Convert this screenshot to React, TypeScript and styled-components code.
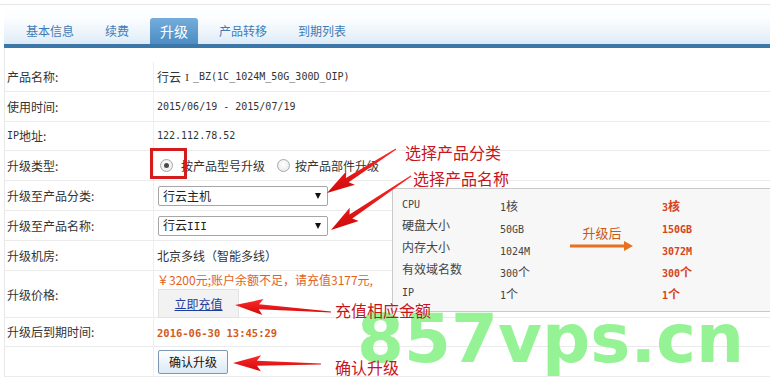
import React from 'react';
import styled, { createGlobalStyle } from 'styled-components';

const GlobalStyle = createGlobalStyle`
  html, body { margin: 0; padding: 0; background: #fff; }
  body {
    font-family: "Noto Sans CJK SC", "Liberation Sans", sans-serif;
    font-size: 12px;
    line-height: 16px;
    color: #333;
  }
`;

const Page = styled.div`
  position: relative;
  width: 770px;
  height: 387px;
  overflow: hidden;
  box-sizing: border-box;
  padding-top: 4px;
`;

const TopRule = styled.div`
  border-top: 1px solid #e6e6e6;
`;

const Header = styled.div`
  margin-left: 4px;
`;

const TabBar = styled.div`
  height: 39px;
  display: flex;
  align-items: flex-end;
  gap: 11px;
  padding-left: 12px;
  background: linear-gradient(#ffffff 0%, #fbfdff 35%, #e6f0f9 85%, #dce9f6 100%);
`;

const Tab = styled.div<{ $active?: boolean }>`
  height: 26px;
  line-height: 26px;
  padding: 0 10px;
  font-size: ${(p) => (p.$active ? '14px' : '12px')};
  color: ${(p) => (p.$active ? '#ffffff' : '#3f7cb6')};
  border-radius: 3px 3px 0 0;
  background: ${(p) => (p.$active ? 'linear-gradient(#74addb, #4c8dc4)' : 'transparent')};
`;

const BlueBar = styled.div`
  height: 4px;
  background: #3b77a8;
`;

const Table = styled.div`
  margin-left: 4px;
  padding-top: 14px;
  border-left: 1px solid #e8e8e8;
`;

const Row = styled.div<{ $h: number }>`
  display: grid;
  grid-template-columns: 149px 1fr;
  height: ${(p) => p.$h}px;
  box-sizing: border-box;
  border-bottom: 1px solid #ebebeb;
`;

const Label = styled.div`
  display: flex;
  align-items: center;
  padding-left: 2px;
  border-right: 1px solid #efefef;
  color: #333;
  font-size: 12px;
`;

const Value = styled.div<{ $column?: boolean }>`
  display: flex;
  flex-direction: ${(p) => (p.$column ? 'column' : 'row')};
  align-items: ${(p) => (p.$column ? 'flex-start' : 'center')};
  padding-left: 3px;
  padding-top: ${(p) => (p.$column ? '2px' : '0')};
  color: #333;
`;

const Mono = styled.span<{ $bold?: boolean; $size?: number }>`
  font-family: "DejaVu Sans Mono", "Liberation Mono", monospace;
  font-size: ${(p) => p.$size ?? 10}px;
  font-weight: ${(p) => (p.$bold ? 700 : 400)};
`;

const Roman = styled.span`
  display: inline-block;
  width: 12px;
  text-align: center;
  font-family: "Liberation Serif", serif;
  font-size: 11px;
`;

const RadioGroup = styled.div`
  display: flex;
  align-items: center;
`;

const RadioWrap = styled.span`
  position: relative;
  display: inline-flex;
  align-items: center;
  margin-left: 3px;
`;

const RadioDot = styled.span<{ $checked?: boolean }>`
  width: 11px;
  height: 11px;
  border-radius: 50%;
  border: 1px solid #a8a8a8;
  background: radial-gradient(circle at 50% 40%, #ffffff 0%, #e6e6e6 100%);
  display: inline-flex;
  align-items: center;
  justify-content: center;
  &::after {
    content: '';
    width: 5px;
    height: 5px;
    border-radius: 50%;
    background: ${(p) => (p.$checked ? '#4a4a4a' : 'transparent')};
  }
`;

const RadioText = styled.span<{ $gap: number }>`
  margin-left: ${(p) => p.$gap}px;
  margin-right: 12px;
  font-size: 12px;
  color: #333;
`;

const Highlight = styled.span`
  position: absolute;
  left: -10px;
  top: -11px;
  width: 37px;
  height: 31px;
  box-sizing: border-box;
  border: 3px solid #d41c1c;
  z-index: 3;
`;

const Select = styled.div`
  width: 170px;
  height: 20px;
  box-sizing: border-box;
  border: 1px solid #a6a6a6;
  border-radius: 2px;
  margin-left: 1px;
  display: flex;
  align-items: center;
  justify-content: space-between;
  padding: 0 6px 0 4px;
  background: #fff;
  color: #222;
  font-size: 12px;
`;

const Caret = styled.span`
  width: 0;
  height: 0;
  border-left: 3.5px solid transparent;
  border-right: 3.5px solid transparent;
  border-top: 6px solid #111;
`;

const PriceText = styled.div`
  color: #e2621c;
  font-size: 12px;
  line-height: 14px;
`;

const RechargeButton = styled.div`
  margin-top: 2px;
  margin-left: 1px;
  width: 81px;
  height: 29px;
  box-sizing: border-box;
  border: 1px solid #e2e2e2;
  background: #f2f2f2;
  display: flex;
  align-items: center;
  justify-content: center;
  color: #1f3d9a;
  text-decoration: underline;
  font-size: 12px;
`;

const Expire = styled.span`
  color: #d35b22;
`;

const ConfirmButton = styled.div`
  margin-left: 1px;
  width: 70px;
  height: 24px;
  box-sizing: border-box;
  border: 1px solid #7d97b3;
  border-radius: 2px;
  background: linear-gradient(#fdfeff, #dbe9f7);
  display: flex;
  align-items: center;
  justify-content: center;
  color: #111;
  font-size: 12px;
`;

const SpecBox = styled.div`
  position: absolute;
  left: 392px;
  top: 188px;
  width: 378px;
  height: 124px;
  box-sizing: border-box;
  border: 1px solid #c9c9c9;
  border-right: none;
  background: #f7f7f7;
  padding: 6px 0 0 9px;
  display: grid;
  grid-template-columns: 98px 68px 94px 1fr;
  grid-auto-rows: 22px;
  z-index: 2;
`;

const SpecLabel = styled.div<{ $row: number }>`
  grid-row: ${(p) => p.$row};
  grid-column: 1;
  align-self: start;
  color: #444;
  font-size: 12px;
  line-height: 16px;
`;

const SpecValue = styled.div<{ $row: number; $new?: boolean }>`
  grid-row: ${(p) => p.$row};
  grid-column: ${(p) => (p.$new ? 4 : 2)};
  align-self: end;
  color: ${(p) => (p.$new ? '#d4441c' : '#444')};
  font-weight: ${(p) => (p.$new ? 700 : 400)};
  font-size: 12px;
  line-height: 16px;
  padding-bottom: 1px;
`;

const SpecArrowCell = styled.div`
  grid-column: 3;
  grid-row: 2 / span 2;
  width: 66px;
  display: flex;
  flex-direction: column;
  align-items: center;
  justify-content: center;
`;

const SpecArrowText = styled.div`
  color: #c85a18;
  font-size: 13px;
  line-height: 14px;
  margin-left: 2px;
`;

const Watermark = styled.div`
  position: absolute;
  left: 357px;
  top: 305px;
  font-family: "DejaVu Sans", sans-serif;
  font-weight: 700;
  font-size: 67.5px;
  line-height: 67.5px;
  color: #95f395;
  white-space: nowrap;
  z-index: 4;
  pointer-events: none;
`;

const Overlay = styled.svg`
  position: absolute;
  left: 0;
  top: 0;
  z-index: 5;
  pointer-events: none;
`;

const Note = styled.div<{ $left: number; $top: number }>`
  position: absolute;
  left: ${(p) => p.$left}px;
  top: ${(p) => p.$top}px;
  color: #c8141c;
  font-size: 16px;
  line-height: 20px;
  white-space: nowrap;
  z-index: 5;
`;

type P = [number, number];

function arrowPoints(tail: P, tip: P, headLen = 24, headW = 16, shaftW = 5, tailW = 1): string {
  const [tx, ty] = tail;
  const [hx, hy] = tip;
  const dx = hx - tx;
  const dy = hy - ty;
  const L = Math.hypot(dx, dy);
  const ux = dx / L;
  const uy = dy / L;
  const nx = -uy;
  const ny = ux;
  const bx = hx - ux * headLen;
  const by = hy - uy * headLen;
  const back = 4;
  const pts: P[] = [
    [tx + (nx * tailW) / 2, ty + (ny * tailW) / 2],
    [bx + (nx * shaftW) / 2, by + (ny * shaftW) / 2],
    [bx - ux * back + (nx * headW) / 2, by - uy * back + (ny * headW) / 2],
    [hx, hy],
    [bx - ux * back - (nx * headW) / 2, by - uy * back - (ny * headW) / 2],
    [bx - (nx * shaftW) / 2, by - (ny * shaftW) / 2],
    [tx - (nx * tailW) / 2, ty - (ny * tailW) / 2],
  ];
  return pts.map((p) => `${p[0].toFixed(1)},${p[1].toFixed(1)}`).join(' ');
}

const arrows: { tail: P; tip: P }[] = [
  { tail: [396, 149], tip: [327, 193] },
  { tail: [411, 176], tip: [331, 230] },
  { tail: [331, 312], tip: [235, 305] },
  { tail: [321, 364], tip: [233, 363] },
];

const tabs = ['基本信息', '续费', '升级', '产品转移', '到期列表'];

const specs = [
  { label: <Mono>CPU</Mono>, old: <><Mono>1</Mono>核</>, now: <><Mono $bold>3</Mono>核</> },
  { label: '硬盘大小', old: <Mono>50GB</Mono>, now: <Mono $bold>150GB</Mono> },
  { label: '内存大小', old: <Mono>1024M</Mono>, now: <Mono $bold>3072M</Mono> },
  { label: '有效域名数', old: <><Mono>300</Mono>个</>, now: <><Mono $bold>300</Mono>个</> },
  { label: <Mono>IP</Mono>, old: <><Mono>1</Mono>个</>, now: <><Mono $bold>1</Mono>个</> },
];

export default function App() {
  return (
    <>
      <GlobalStyle />
      <Page>
        <TopRule />
        <Header>
          <TabBar>
            {tabs.map((t) => (
              <Tab key={t} $active={t === '升级'}>
                {t}
              </Tab>
            ))}
          </TabBar>
          <BlueBar />
        </Header>
        <Table>
          <Row $h={30}>
            <Label>产品名称:</Label>
            <Value>
              行云<Roman>I</Roman>
              <Mono>_BZ(1C_1024M_50G_300D_OIP)</Mono>
            </Value>
          </Row>
          <Row $h={30}>
            <Label>使用时间:</Label>
            <Value>
              <Mono>2015/06/19 - 2015/07/19</Mono>
            </Value>
          </Row>
          <Row $h={29}>
            <Label>
              <Mono>IP</Mono>地址:
            </Label>
            <Value>
              <Mono>122.112.78.52</Mono>
            </Value>
          </Row>
          <Row $h={30}>
            <Label>升级类型:</Label>
            <Value>
              <RadioGroup>
                <RadioWrap>
                  <RadioDot $checked />
                  <Highlight />
                </RadioWrap>
                <RadioText $gap={8}>按产品型号升级</RadioText>
                <RadioDot />
                <RadioText $gap={5}>按产品部件升级</RadioText>
              </RadioGroup>
            </Value>
          </Row>
          <Row $h={30}>
            <Label>升级至产品分类:</Label>
            <Value>
              <Select>
                <span>行云主机</span>
                <Caret />
              </Select>
            </Value>
          </Row>
          <Row $h={30}>
            <Label>升级至产品名称:</Label>
            <Value>
              <Select>
                <span>
                  行云<Mono $size={11}>III</Mono>
                </span>
                <Caret />
              </Select>
            </Value>
          </Row>
          <Row $h={30}>
            <Label>升级机房:</Label>
            <Value>北京多线（智能多线）</Value>
          </Row>
          <Row $h={47}>
            <Label>升级价格:</Label>
            <Value $column>
              <PriceText>￥3200元;账户余额不足，请充值3177元,</PriceText>
              <RechargeButton>立即充值</RechargeButton>
            </Value>
          </Row>
          <Row $h={29}>
            <Label>升级后到期时间:</Label>
            <Value>
              <Expire>
                <Mono $bold $size={10.5}>
                  2016-06-30 13:45:29
                </Mono>
              </Expire>
            </Value>
          </Row>
          <Row $h={30}>
            <Label />
            <Value>
              <ConfirmButton>确认升级</ConfirmButton>
            </Value>
          </Row>
        </Table>

        <SpecBox>
          {specs.map((s, i) => (
            <React.Fragment key={i}>
              <SpecLabel $row={i + 1}>{s.label}</SpecLabel>
              <SpecValue $row={i + 1}>{s.old}</SpecValue>
              <SpecValue $row={i + 1} $new>
                {s.now}
              </SpecValue>
            </React.Fragment>
          ))}
          <SpecArrowCell>
            <SpecArrowText>升级后</SpecArrowText>
            <svg width="66" height="12" viewBox="0 0 66 12">
              <rect x="2" y="4.5" width="56" height="3" fill="#e8701e" />
              <polygon points="56,1 65,6 56,11" fill="#e8701e" />
            </svg>
          </SpecArrowCell>
        </SpecBox>

        <Watermark>857vps.cn</Watermark>

        <Overlay width="770" height="387" viewBox="0 0 770 387">
          <defs>
            <linearGradient id="redArrow" x1="0" y1="0" x2="0" y2="1">
              <stop offset="0" stopColor="#ff2a2a" />
              <stop offset="1" stopColor="#d00a0a" />
            </linearGradient>
          </defs>
          {arrows.map((a, i) => (
            <polygon key={i} points={arrowPoints(a.tail, a.tip)} fill="url(#redArrow)" />
          ))}
        </Overlay>

        <Note $left={405} $top={142}>选择产品分类</Note>
        <Note $left={413} $top={168}>选择产品名称</Note>
        <Note $left={335} $top={300}>充值相应金额</Note>
        <Note $left={335} $top={357}>确认升级</Note>
      </Page>
    </>
  );
}
